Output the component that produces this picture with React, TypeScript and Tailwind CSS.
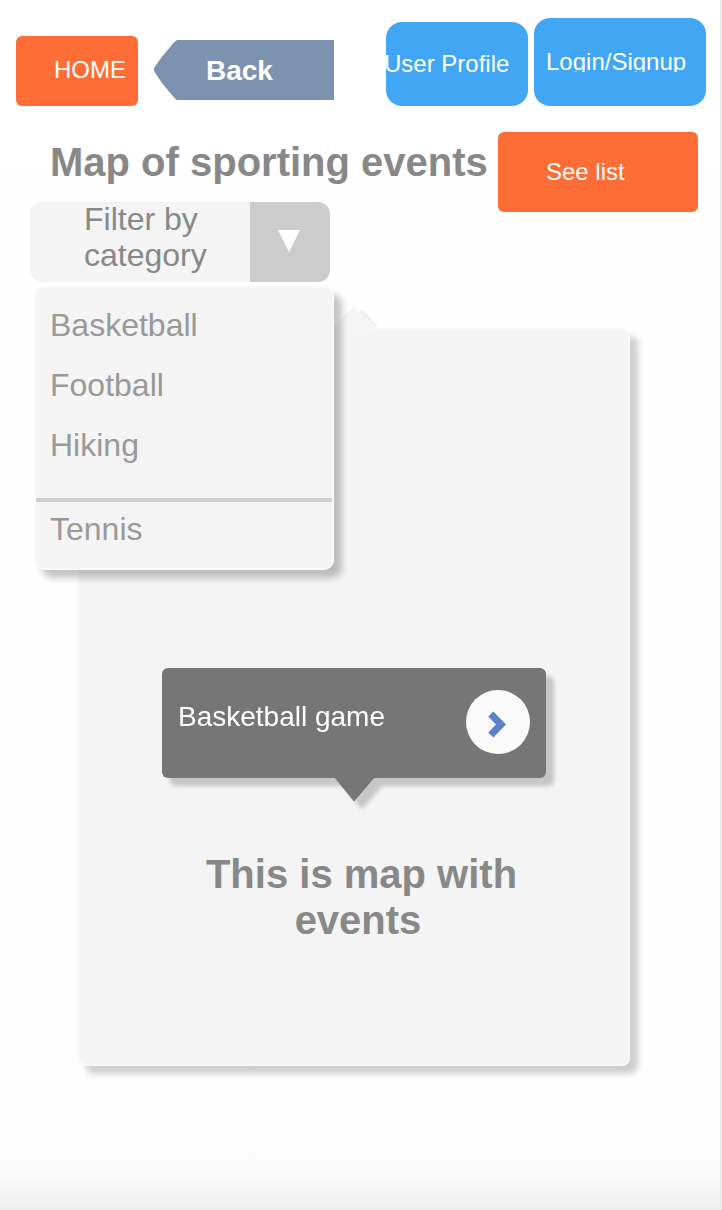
const categories = ["Basketball", "Football", "Hiking"];

function Header() {
  return (
    <header className="flex h-[106px] items-end pl-4 text-[24px] leading-7 text-white">
      <button className="flex h-[70px] w-[122px] items-center rounded-md bg-[#ff6d36] pb-[3px] pl-[38px]">
        HOME
      </button>
      <button className="relative mb-1.5 ml-4 flex h-[60px] w-[180px] items-center pt-[2px] pl-[52px] text-[28px] font-bold">
        <svg className="absolute inset-0" width="180" height="60" viewBox="0 0 180 60">
          <path d="M180 0H23Q20 2 17 6Q7 17 0 28V31Q7 43 17 54Q20 58 23 60H180Z" fill="#7d92ae" />
        </svg>
        <span className="relative">Back</span>
      </button>
      <button className="ml-[52px] flex h-[84px] w-[142px] items-center overflow-hidden rounded-2xl bg-[#41a7f5] whitespace-nowrap">
        <span className="-ml-[2px]">User Profile</span>
      </button>
      <button className="ml-1.5 flex h-[88px] w-[172px] items-start rounded-2xl bg-[#41a7f5] pt-[30px] pl-3">
        <span className="h-6 overflow-hidden">Login/Signup</span>
      </button>
    </header>
  );
}

function CategoryMenu() {
  return (
    <div className="absolute top-[84px] left-1 z-10 h-[284px] w-[300px] rounded-[10px] border-2 border-[#f9f9f9] bg-[#f4f4f4] pt-[7px] text-[32px] text-[#999] shadow-[8px_8px_7px_rgba(0,0,0,0.23)]">
      <ul>
        {categories.map((name) => (
          <li key={name} className="flex h-[60px] items-center pl-3.5">
            {name}
          </li>
        ))}
      </ul>
      <div className="mt-[23px] h-1 bg-[#d1cdcd]" />
      <div className="flex h-[54px] items-center pl-3.5">Tennis</div>
    </div>
  );
}

function Filter() {
  return (
    <div className="relative -mt-2.5 ml-[30px] flex h-20 w-[300px]">
      <div className="w-[220px] rounded-l-xl bg-[#f4f4f4] pl-[54px] text-[32px] leading-9 text-[#888]">
        <div className="-mt-px">Filter by category</div>
      </div>
      <div className="flex w-20 justify-center rounded-r-xl bg-[#ccc] pt-7 pr-[2px]">
        <svg width="22" height="22" viewBox="0 0 22 22">
          <path d="M0 0H22L11 22Z" fill="#fff" />
        </svg>
      </div>
      <CategoryMenu />
    </div>
  );
}

function EventCallout() {
  return (
    <div className="relative ml-[82px] flex h-[110px] w-[384px] items-start justify-between rounded-md bg-[#767676] pt-[22px] pr-4 pl-4 text-[28px] text-white drop-shadow-[8px_8px_2px_rgba(0,0,0,0.19)]">
      <span className="mt-[6px] leading-[42px]">Basketball game</span>
      <span className="flex size-16 rounded-full bg-[#fafafa] pt-5 pl-[20px]">
        <svg width="22" height="30" viewBox="0 0 22 30">
          <path d="M4.8 4L15 14.5L4.8 25" fill="none" stroke="#5b82c4" strokeWidth="7.2" />
        </svg>
      </span>
      <svg className="absolute top-[109px] left-[172px]" width="41" height="25" viewBox="0 0 41 25">
        <path d="M0 0H41L20 24.5Z" fill="#767676" />
      </svg>
    </div>
  );
}

function MapPanel() {
  return (
    <section className="relative mt-[46px] ml-[78px] h-[738px] w-[552px] rounded-lg border-2 border-[#f9f9f9] bg-[#f4f4f4] pt-[338px] shadow-[8px_8px_6px_rgba(0,0,0,0.19)]">
      <svg className="absolute -top-6 left-[247px]" width="54" height="27" viewBox="0 0 54 27">
        <path d="M33 5Q38 8 49 21" fill="none" stroke="#f0f0f0" strokeWidth="3.5" />
        <path d="M3 27V24L25 2Q27 0 29 2L48 23V27Z" fill="#f5f5f5" />
      </svg>
      <EventCallout />
      <div className="mt-[73px] pl-[15px] text-center text-[40px] leading-[46px] font-bold text-[#888]">
        <div>This is map with</div>
        <div className="pr-[7px]">events</div>
      </div>
    </section>
  );
}

export default function App() {
  return (
    <main className="relative h-[1210px] w-[722px] overflow-hidden border-r-2 border-[#ebebeb] bg-white bg-[linear-gradient(to_bottom,#fff_0,#fefefe_93%,#fbfbfb_96.5%,#f5f5f5_98.5%,#eee_100%)] font-['Liberation_Sans',Arial,sans-serif]">
      <Header />
      <div className="mt-[26px] flex h-20">
        <h1 className="w-[498px] pt-1.5 pl-[50px] text-[40px] leading-[48px] font-bold whitespace-nowrap text-[#888]">
          Map of sporting events
        </h1>
        <button className="flex h-20 w-[200px] items-center rounded-md bg-[#ff6d36] pl-12 text-[24px] leading-7 text-white">
          See list
        </button>
      </div>
      <Filter />
      <MapPanel />
    </main>
  );
}
